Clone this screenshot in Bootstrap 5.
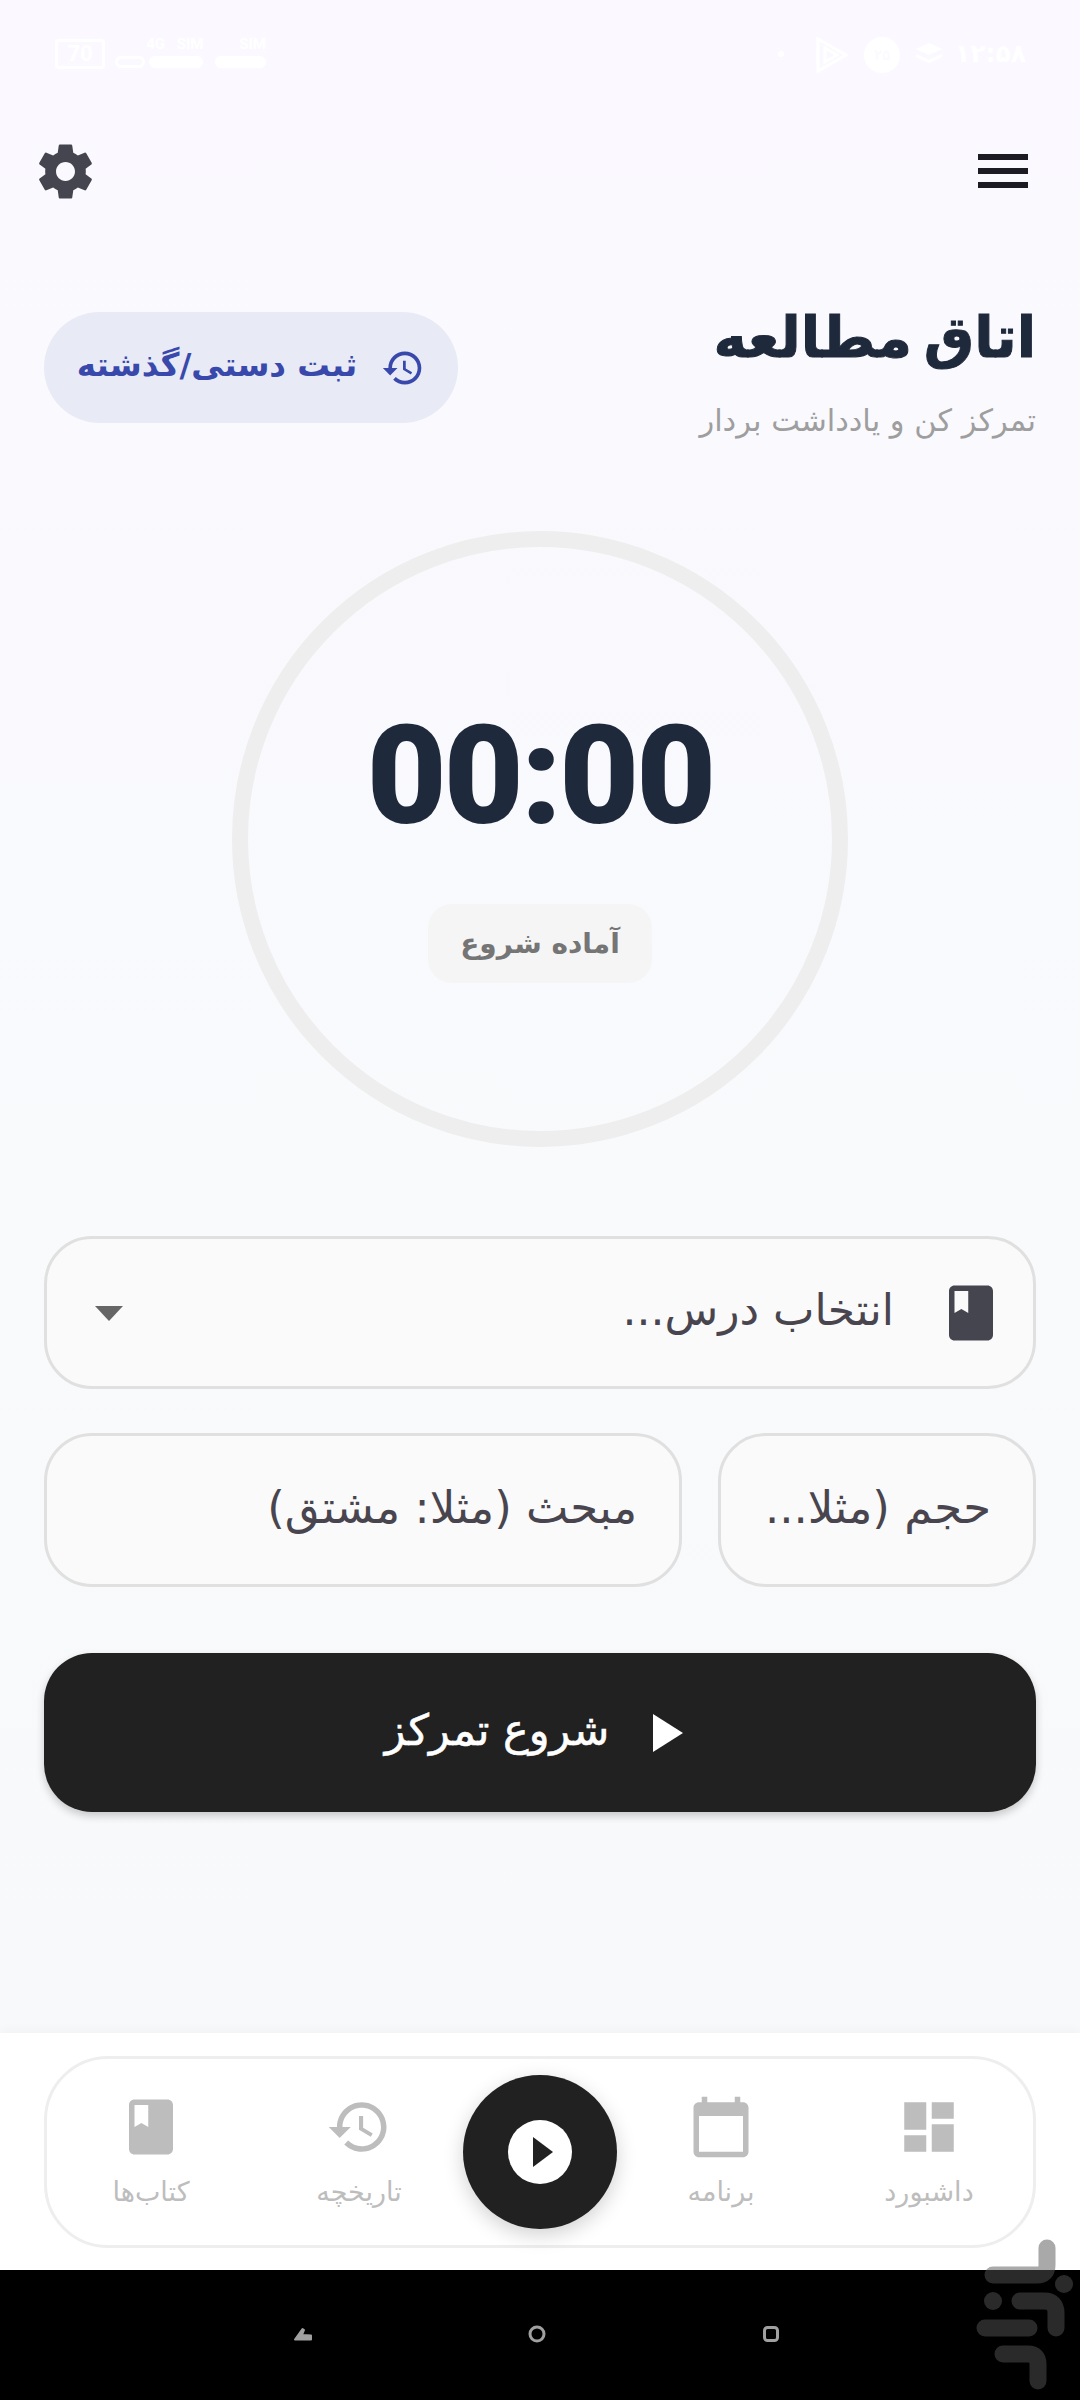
<!DOCTYPE html>
<html lang="fa" dir="rtl">

<head>
    <meta charset="UTF-8">
    <meta name="viewport" content="width=device-width, initial-scale=1.0">
    <title>اتاق مطالعه</title>

    <!-- Bootstrap CSS CDN -->
    <link href="https://cdn.jsdelivr.net/npm/bootstrap@5.3.2/dist/css/bootstrap.min.css" rel="stylesheet">

    <style>
        body {
            width: 1080px;
            height: 2400px;
            overflow: hidden;
            position: relative;
            font-family: "DejaVu Sans", sans-serif;
            background: #000;
        }

        /* status bar, white on almost white like in the shot */
        .status-row {
            height: 96px;
            padding: 37px 54px 0 55px;
            color: #fff;
            font-family: Roboto, sans-serif;
        }

        .status-right { gap: 16px; }
        .status-clock { width: 68px; font-family: "DejaVu Sans", sans-serif; font-size: 25px; line-height: 34px; font-weight: 700; white-space: nowrap; }
        .status-layers { margin-top: 6px; }
        .status-num { width: 36px; height: 36px; font-size: 15px; background: #fff; color: #fbf9ff; }
        .status-dot { width: 6px; height: 6px; margin: 14px 16px 0 0; background: #fff; }
        .status-box { width: 50px; height: 30px; margin-top: 2px; border: 3px solid #fff; border-radius: 4px; font-size: 22px; font-weight: 700; line-height: 24px; }
        .status-left { gap: 10px; }
        .status-sim { font-size: 15px; line-height: 15px; font-weight: 700; word-spacing: 8px; }
        .status-pills { gap: 4px; margin-top: 4px; }
        .status-pill { height: 12px; border: 3px solid #fff; border-radius: 6px; }
        .status-pill-full { background: #fff; }

        .main-area {
            height: 2033px;
            background: linear-gradient(#fbf9ff, #f8fafc 60%, #f8f9fb);
        }

        .top-row { height: 150px; padding: 0 52px 0 33px; }
        .menu-lines { width: 50px; height: 34px; }
        .menu-lines span { height: 6px; background: #1c1b23; }

        .head-row { padding: 0 44px; margin-top: 53px; }
        .page-title { font-size: 56.5px; line-height: 78px; font-weight: 700; color: #1e293b; word-spacing: -8px; -webkit-text-stroke: 1px #1e293b; }
        .page-sub { font-size: 30.5px; line-height: 40px; color: #9e9e9e; margin-top: 24px; }

        .manual-btn {
            width: 414px;
            height: 111px;
            margin-top: 13px;
            background: #e8eaf6;
            color: #3949ab;
            font-size: 32.5px;
            font-weight: 600;
            gap: 24px;
        }

        .manual-btn span { padding-bottom: 5px; }

        .timer-ring {
            width: 616px;
            height: 616px;
            margin: 90px auto 0;
            border: 16px solid #eeeeee;
        }

        .timer-digits {
            font-family: Roboto, sans-serif;
            font-size: 138px;
            line-height: 120px;
            font-weight: 900;
            letter-spacing: -3px;
            color: #1e293b;
            margin-top: 21px;
        }

        .timer-state {
            width: 224px;
            height: 79px;
            margin-top: 68px;
            border-radius: 24px;
            background: #f5f5f5;
            color: #757575;
            font-size: 28px;
            font-weight: 700;
        }

        .form-area { padding: 0 44px; margin-top: 89px; }

        .lesson-field,
        .form-control.text-field {
            height: 153px;
            border: 3px solid #e0e0e0;
            border-radius: 48px;
            background: #fafafa;
            color: #49454f;
            box-shadow: none;
        }

        .lesson-field { padding: 0 29px 0 48px; gap: 44px; font-size: 44px; }
        .lesson-field .lesson-name { padding-bottom: 6px; }
        .form-control.text-field { height: 154px; padding: 0 42px 6px; font-size: 45px; }
        .text-field::placeholder { color: #49454f; opacity: 1; }
        .topic-wrap { width: 638px; }
        .size-wrap { width: 318px; }
        .drop-tip { width: 0; height: 0; border-top: 15px solid #666; border-left: 14px solid transparent; border-right: 14px solid transparent; margin-top: 2px; }

        .start-btn {
            height: 159px;
            margin-top: 66px;
            border-radius: 48px;
            background: #212121;
            border: 0;
            color: #fff;
            font-size: 43px;
            gap: 44px;
            padding: 0 24px 0 12px;
            -webkit-text-stroke: .6px #fff;
            box-shadow: 0 4px 8px rgba(0, 0, 0, .2);
        }

        .start-btn span { padding-bottom: 4px; }

        .nav-area {
            height: 237px;
            padding: 23px 44px 0;
            background: #fff;
            box-shadow: 0 -3px 10px rgba(0, 0, 0, .03);
            position: relative;
        }

        .nav-pill {
            height: 192px;
            border: 3px solid #eeeeee;
            border-radius: 64px;
        }

        .nav-cell {
            flex: 1 1 0;
            padding-top: 35px;
            color: #bdbdbd;
            font-size: 27px;
            line-height: 34px;
        }

        .nav-cell svg { margin-bottom: 15px; }

        .nav-fab {
            width: 154px;
            height: 154px;
            background: #212121;
            box-shadow: 0 6px 20px rgba(0, 0, 0, .18);
        }

        .fab-inner { width: 64px; height: 64px; background: #fff; }
        .fab-inner svg { margin-left: 6px; }

        .sys-row { height: 130px; padding: 0 6px 3px 0; }
        .sys-cell { width: 234px; }

        .store-mark { position: absolute; left: 960px; top: 2230px; }
    </style>
</head>

<body>
    <div class="main-area">
        <div class="status-row d-flex justify-content-between">
            <div class="status-right d-flex align-items-start">
                <span class="status-clock">۱۲:۵۸</span>
                <svg class="status-layers" width="26" height="24" viewBox="0 0 26 24" fill="#fff"><path d="M13 0l13 6-13 6L0 6zM0 11l13 6 13-6v3l-13 6-13-6z"/></svg>
                <span class="status-num rounded-circle d-flex align-items-center justify-content-center">۲۵</span>
                <svg width="32" height="36" viewBox="0 0 32 36" fill="none" stroke="#fff" stroke-width="3"><path d="M2 2l28 16L2 34zM9 11v14l12-7z"/></svg>
                <span class="status-dot rounded-circle"></span>
            </div>
            <div class="status-left d-flex" dir="ltr">
                <div class="status-box text-center">70</div>
                <div>
                    <div class="status-sim text-end">4G SIM <span class="ps-4">SIM</span></div>
                    <div class="status-pills d-flex">
                        <div class="status-pill" style="width: 30px;"></div>
                        <div class="status-pill status-pill-full" style="width: 54px;"></div>
                        <div class="status-pill status-pill-full ms-2" style="width: 51px;"></div>
                    </div>
                </div>
            </div>
        </div>

        <div class="top-row d-flex justify-content-between align-items-center">
            <div class="menu-lines d-flex flex-column justify-content-between">
                <span></span><span></span><span></span>
            </div>
            <svg width="65" height="65" viewBox="0 0 24 24" fill="#44454f"><path d="M19.43 12.98c.04-.32.07-.64.07-.98 0-.34-.03-.66-.07-.98l2.11-1.65c.19-.15.24-.42.12-.64l-2-3.46c-.12-.22-.39-.3-.61-.22l-2.49 1c-.52-.4-1.08-.73-1.69-.98l-.38-2.65C14.46 2.18 14.25 2 14 2h-4c-.25 0-.46.18-.49.42l-.38 2.65c-.61.25-1.17.59-1.69.98l-2.49-1c-.23-.09-.49 0-.61.22l-2 3.46c-.13.22-.07.49.12.64l2.11 1.65c-.04.32-.07.65-.07.98s.03.66.07.98l-2.11 1.65c-.19.15-.24.42-.12.64l2 3.46c.12.22.39.3.61.22l2.49-1c.52.4 1.08.73 1.69.98l.38 2.65c.03.24.24.42.49.42h4c.25 0 .46-.18.49-.42l.38-2.65c.61-.25 1.17-.59 1.69-.98l2.49 1c.23.09.49 0 .61-.22l2-3.46c.12-.22.07-.49-.12-.64l-2.11-1.65zM12 15.5c-1.93 0-3.5-1.57-3.5-3.5s1.57-3.5 3.5-3.5 3.5 1.57 3.5 3.5-1.57 3.5-3.5 3.5z"/></svg>
        </div>

        <div class="head-row d-flex justify-content-between align-items-start">
            <div>
                <div class="page-title">اتاق مطالعه</div>
                <div class="page-sub">تمرکز کن و یادداشت بردار</div>
            </div>
            <button type="button" class="manual-btn btn rounded-pill d-flex align-items-center justify-content-center p-0">
                <svg width="44" height="44" viewBox="0 0 24 24" fill="#3949ab"><path d="M13 3c-4.97 0-9 4.03-9 9H1l3.89 3.89.07.14L9 12H6c0-3.87 3.13-7 7-7s7 3.13 7 7-3.13 7-7 7c-1.93 0-3.68-.79-4.94-2.06l-1.42 1.42C8.27 19.99 10.51 21 13 21c4.97 0 9-4.03 9-9s-4.03-9-9-9zm-1 5v5l4.28 2.54.72-1.21-3.5-2.08V8H12z"/></svg>
                <span>ثبت دستی/گذشته</span>
            </button>
        </div>

        <div class="timer-ring rounded-circle d-flex flex-column align-items-center justify-content-center">
            <div class="timer-digits" dir="ltr">00:00</div>
            <div class="timer-state d-flex align-items-center justify-content-center">آماده شروع</div>
        </div>

        <form class="form-area">
            <div class="lesson-field d-flex align-items-center">
                <svg width="66" height="66" viewBox="0 0 24 24" fill="#44454f"><path d="M18 2H6c-1.1 0-2 .9-2 2v16c0 1.1.9 2 2 2h12c1.1 0 2-.9 2-2V4c0-1.1-.9-2-2-2zM6 4h5v8l-2.5-1.5L6 12V4z"/></svg>
                <span class="lesson-name flex-grow-1">انتخاب درس...</span>
                <span class="drop-tip"></span>
            </div>
            <div class="d-flex justify-content-between" style="margin-top: 44px;">
                <div class="size-wrap"><input type="text" class="form-control text-field" placeholder="حجم (مثلا..."></div>
                <div class="topic-wrap"><input type="text" class="form-control text-field" placeholder="مبحث (مثلا: مشتق)"></div>
            </div>
            <button type="button" class="start-btn btn w-100 d-flex align-items-center justify-content-center">
                <svg width="30" height="38" viewBox="0 0 30 38" fill="#fff"><path d="M0 0l30 19L0 38z"/></svg>
                <span>شروع تمرکز</span>
            </button>
        </form>
    </div>

    <div class="nav-area">
        <div class="nav-pill d-flex align-items-center">
            <div class="nav-cell d-flex flex-column align-items-center align-self-start">
                <svg width="66" height="66" viewBox="0 0 24 24" fill="#bdbdbd"><path d="M3 13h8V3H3v10zm0 8h8v-6H3v6zm10 0h8V11h-8v10zm0-18v6h8V3h-8z"/></svg>
                <span>داشبورد</span>
            </div>
            <div class="nav-cell d-flex flex-column align-items-center align-self-start">
                <svg width="66" height="66" viewBox="0 0 24 24" fill="#bdbdbd"><path d="M20 3h-1V1h-2v2H7V1H5v2H4c-1.1 0-2 .9-2 2v16c0 1.1.9 2 2 2h16c1.1 0 2-.9 2-2V5c0-1.1-.9-2-2-2zm0 18H4V8h16v13z"/></svg>
                <span>برنامه</span>
            </div>
            <div class="nav-fab rounded-circle d-flex align-items-center justify-content-center">
                <div class="fab-inner rounded-circle d-flex align-items-center justify-content-center">
                    <svg width="20" height="30" viewBox="0 0 20 30" fill="#212121"><path d="M0 0l20 15L0 30z"/></svg>
                </div>
            </div>
            <div class="nav-cell d-flex flex-column align-items-center align-self-start">
                <svg width="66" height="66" viewBox="0 0 24 24" fill="#bdbdbd"><path d="M13 3c-4.97 0-9 4.03-9 9H1l3.89 3.89.07.14L9 12H6c0-3.87 3.13-7 7-7s7 3.13 7 7-3.13 7-7 7c-1.93 0-3.68-.79-4.94-2.06l-1.42 1.42C8.27 19.99 10.51 21 13 21c4.97 0 9-4.03 9-9s-4.03-9-9-9zm-1 5v5l4.28 2.54.72-1.21-3.5-2.08V8H12z"/></svg>
                <span>تاریخچه</span>
            </div>
            <div class="nav-cell d-flex flex-column align-items-center align-self-start">
                <svg width="66" height="66" viewBox="0 0 24 24" fill="#bdbdbd"><path d="M18 2H6c-1.1 0-2 .9-2 2v16c0 1.1.9 2 2 2h12c1.1 0 2-.9 2-2V4c0-1.1-.9-2-2-2zM6 4h5v8l-2.5-1.5L6 12V4z"/></svg>
                <span>کتاب‌ها</span>
            </div>
        </div>
    </div>

    <!-- android navigation keys -->
    <div class="sys-row d-flex align-items-center justify-content-center">
        <div class="sys-cell text-center">
            <svg width="16" height="16" viewBox="0 0 16 16" fill="none" stroke="#a0a0a0" stroke-width="3" stroke-linejoin="round"><rect x="1.500" y="1.500" width="13" height="13" rx="3"/></svg>
        </div>
        <div class="sys-cell text-center">
            <svg width="18" height="18" viewBox="0 0 18 18" fill="none" stroke="#a0a0a0" stroke-width="3"><circle cx="9" cy="9" r="7"/></svg>
        </div>
        <div class="sys-cell text-center">
            <svg width="18" height="14" viewBox="0 0 18 14" fill="#a0a0a0" stroke="#a0a0a0" stroke-width="2" stroke-linejoin="round"><path d="M1 12.500L8.500 2l1.500 1-2 5 9 .5v4z"/></svg>
        </div>
    </div>

    <svg class="store-mark" width="120" height="170" viewBox="0 0 120 170" fill="none" opacity=".5">
        <g stroke="#555" stroke-width="17" stroke-linecap="round" stroke-linejoin="round">
            <path d="M87 18v17q0 10-10 10H33"/>
            <path d="M60 71h24q12 0 12 12v15"/>
            <path d="M25 98h44"/>
            <path d="M43 124h25q10 0 10 10v17"/>
        </g>
        <circle cx="104" cy="54" r="9" fill="#555"/>
        <circle cx="33" cy="71" r="9" fill="#555"/>
    </svg>

    <!-- Bootstrap JS Bundle CDN -->
    <script src="https://cdn.jsdelivr.net/npm/bootstrap@5.3.2/dist/js/bootstrap.bundle.min.js"></script>
</body>

</html>
